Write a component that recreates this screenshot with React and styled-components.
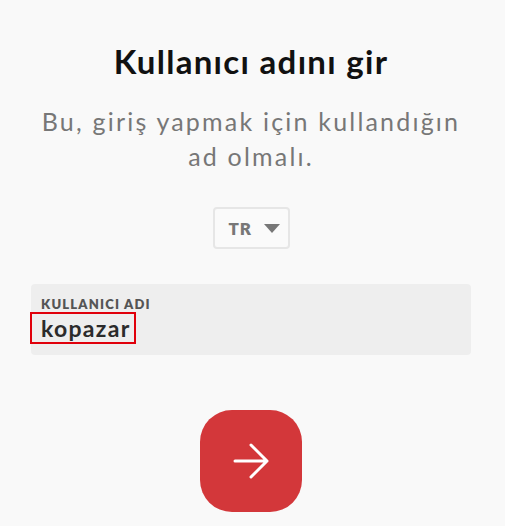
import styled, {createGlobalStyle} from 'styled-components'

const GlobalStyle = createGlobalStyle`
  * { box-sizing: border-box; }
  body {
    margin: 0;
    background: #f9f9f9;
    font-family: Lato, "Noto Sans", sans-serif;
  }
`

const Page = styled.div`
  display: flex;
  flex-direction: column;
  align-items: center;
  padding: 38px 34px 0 31px;
  height: 526px;
`
const Title = styled.h1`
  margin: 0;
  font-size: 33px;
  line-height: 46px;
  font-weight: 700;
  letter-spacing: 1.3px;
  color: #111;
  text-align: center;
`
const Subtitle = styled.p`
  margin: 20px 0 0;
  font-size: 25px;
  line-height: 35px;
  font-weight: 400;
  letter-spacing: 2.2px;
  color: #777;
  text-align: center;
`
const LangSelect = styled.button`
  display: flex;
  align-items: center;
  gap: 12px;
  margin-top: 33px;
  width: 77px;
  height: 42px;
  padding: 0 0 0 14px;
  border: 2px solid #e6e6e6;
  border-radius: 4px;
  background: #fafafa;
  font-family: inherit;
  font-size: 17px;
  font-weight: 800;
  letter-spacing: 1px;
  color: #777;
`
const Field = styled.div`
  align-self: stretch;
  margin-top: 35px;
  height: 71px;
  padding: 12px 10px 0;
  background: #eeeeee;
  border-radius: 4px;
`
const Label = styled.div`
  font-size: 13px;
  line-height: 16px;
  font-weight: 800;
  letter-spacing: 1.2px;
  color: #555;
`
const Value = styled.span`
  display: inline-block;
  margin: 2px 0 0 -9px;
  padding: 1px 3px 1px 9px;
  font-size: 23px;
  line-height: 26px;
  font-weight: 700;
  letter-spacing: 1.3px;
  color: #2b2b2b;
  outline: 2px solid #e0000b;
`
const NextButton = styled.button`
  display: flex;
  align-items: center;
  justify-content: center;
  margin-top: 55px;
  width: 102px;
  height: 102px;
  border: none;
  border-radius: 32px;
  background: #d3373a;
`

const App = () => {
  return (
    <>
      <GlobalStyle/>
      <Page>
        <Title>Kullanıcı adını gir</Title>
        <Subtitle>Bu, giriş yapmak için kullandığın<br/>ad olmalı.</Subtitle>
        <LangSelect>
          TR
          <svg width="16" height="9" viewBox="0 0 16 9"><path d="M0 0h16L8 9z" fill="#777"/></svg>
        </LangSelect>
        <Field>
          <Label>KULLANICI ADI</Label>
          <Value>kopazar</Value>
        </Field>
        <NextButton>
          <svg width="36" height="36" viewBox="0 0 36 36" fill="none" stroke="#fff" strokeWidth="3" strokeLinecap="round" strokeLinejoin="round">
            <path d="M2 18h32M18 2l16 16-16 16"/>
          </svg>
        </NextButton>
      </Page>
    </>
  )
}

export default App
